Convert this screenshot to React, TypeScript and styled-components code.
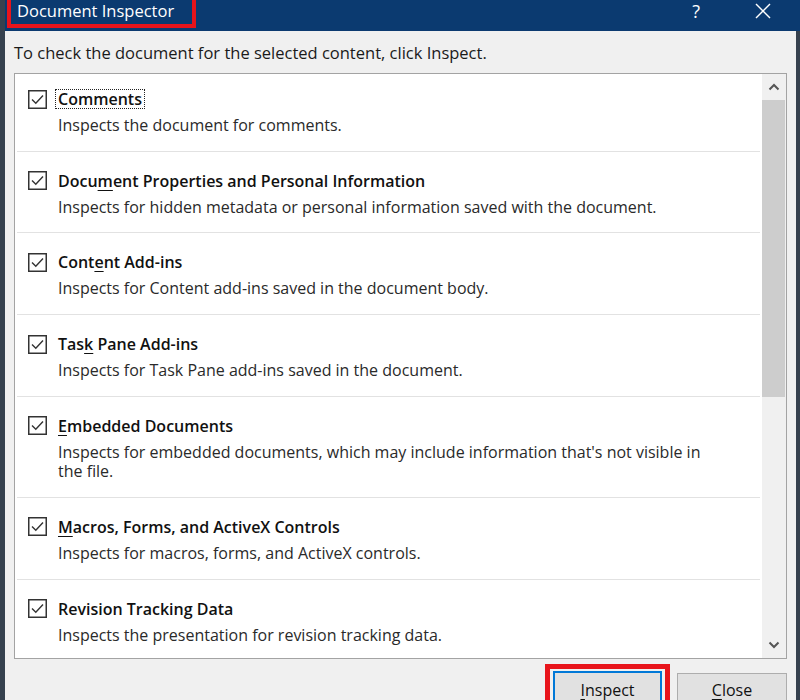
import styled, { createGlobalStyle } from "styled-components";

const items = [
  {
    title: "Comments",
    desc: "Inspects the document for comments.",
    focused: true,
  },
  {
    title: "Document Properties and Personal Information",
    key: 4,
    desc: "Inspects for hidden metadata or personal information saved with the document.",
  },
  {
    title: "Content Add-ins",
    key: 4,
    desc: "Inspects for Content add-ins saved in the document body.",
  },
  {
    title: "Task Pane Add-ins",
    key: 3,
    desc: "Inspects for Task Pane add-ins saved in the document.",
  },
  {
    title: "Embedded Documents",
    key: 0,
    desc: "Inspects for embedded documents, which may include information that's not visible in the file.",
  },
  {
    title: "Macros, Forms, and ActiveX Controls",
    key: 0,
    desc: "Inspects for macros, forms, and ActiveX controls.",
  },
  {
    title: "Revision Tracking Data",
    desc: "Inspects the presentation for revision tracking data.",
  },
];

const GlobalStyle = createGlobalStyle`
  html, body {
    margin: 0;
    padding: 0;
    background: #36414e;
  }
  * {
    box-sizing: border-box;
  }
`;

const Screen = styled.div`
  width: 800px;
  height: 700px;
  overflow: hidden;
  padding-left: 5px;
  padding-right: 4px;
  font-family: "Open Sans", "Noto Sans", sans-serif;
`;

const Dialog = styled.div`
  height: 100%;
  display: flex;
  flex-direction: column;
  background: #f0f0f0;
`;

const TitleBar = styled.div`
  height: 31px;
  flex: none;
  display: flex;
  align-items: flex-start;
  background: #0b3a70;
  color: #fff;
  margin-right: -4px;
`;

const TitleLabel = styled.div`
  margin-left: 2px;
  height: 28px;
  width: 189px;
  padding: 0 0 0 6px;
  border: 4px solid #e8141b;
  border-top: none;
  font-size: 16.5px;
  line-height: 21px;
`;

const TitleButtons = styled.div`
  margin-left: auto;
  display: flex;
  align-items: center;
  height: 22px;
`;

const Help = styled.span`
  font-size: 18px;
  line-height: 22px;
  margin-right: 55px;
`;

const CloseX = styled.svg`
  width: 16px;
  height: 16px;
  margin-right: 29px;
`;

const Body = styled.div`
  flex: 1;
  display: flex;
  flex-direction: column;
  padding: 12px 9px 0 9px;
  min-height: 0;
`;

const Instruction = styled.div`
  font-size: 16.5px;
  line-height: 20px;
  color: #1a1a1a;
  margin-bottom: 10px;
  white-space: nowrap;
`;

const ListBox = styled.div`
  height: 586px;
  flex: none;
  display: flex;
  background: #fff;
  border: 1px solid #a3a3a3;
`;

const ListItems = styled.div`
  flex: 1;
  overflow: hidden;
  padding: 0 2px;
`;

const Item = styled.div`
  display: grid;
  grid-template-columns: 19px 1fr;
  column-gap: 11px;
  row-gap: 7px;
  padding: 19px 42px 15.2px 11px;
  border-bottom: 1px solid #e2e2e2;

  &:first-child {
    padding-top: 15px;
  }
  &:last-child {
    border-bottom: none;
  }
`;

const Box = styled.svg`
  width: 19px;
  height: 19px;
  align-self: center;
`;

const Title = styled.div<{ $focused?: boolean }>`
  justify-self: start;
  font-size: 16px;
  font-weight: 600;
  line-height: 18px;
  color: #111;
  padding: 0 2px;
  margin-left: -3px;
  white-space: nowrap;
  border: 1px dotted ${(p) => (p.$focused ? "#222" : "transparent")};
`;

const Key = styled.u`
  text-decoration-thickness: 1px;
  text-underline-offset: 3px;
`;

const Desc = styled.div`
  grid-column: 2;
  font-size: 16px;
  line-height: 19.5px;
  color: #2a2a2a;
`;

const ScrollBar = styled.div`
  width: 24px;
  flex: none;
  display: flex;
  flex-direction: column;
  background: #f0f0f0;
`;

const Arrow = styled.div`
  height: 26px;
  flex: none;
  display: flex;
  align-items: center;
  justify-content: center;
`;

const Thumb = styled.div`
  height: 297px;
  flex: none;
  background: #cdcdcd;
  margin: 0 1px 0 0;
`;

const Track = styled.div`
  flex: 1;
`;

const Footer = styled.div`
  display: flex;
  justify-content: flex-end;
  align-items: flex-start;
  gap: 7px;
  margin-top: 5px;
`;

const Highlight = styled.div`
  border: 5px solid #e8141b;
  border-bottom: none;
  padding: 2px 3px 0 3px;
  height: 40px;
`;

const Button = styled.div<{ $default?: boolean }>`
  width: ${(p) => (p.$default ? "109px" : "110px")};
  height: 36px;
  margin-top: ${(p) => (p.$default ? "0" : "9px")};
  display: flex;
  justify-content: center;
  padding-top: ${(p) => (p.$default ? "7px" : "6px")};
  background: #e1e1e1;
  border: ${(p) => (p.$default ? "2px solid #0078d7" : "1px solid #adadad")};
  font-size: 16px;
  line-height: 20px;
  color: #111;
`;

function Label({ text, at }: { text: string; at?: number }) {
  if (at === undefined) return <>{text}</>;
  return (
    <>
      {text.slice(0, at)}
      <Key>{text[at]}</Key>
      {text.slice(at + 1)}
    </>
  );
}

function Check() {
  return (
    <Box viewBox="0 0 19 19">
      <rect x="0.75" y="0.75" width="17.5" height="17.5" fill="#fff" stroke="#333" strokeWidth="1.5" />
      <polyline points="4,9.5 7.8,13.2 15,5.5" fill="none" stroke="#333" strokeWidth="1.4" />
    </Box>
  );
}

function Chevron({ up }: { up?: boolean }) {
  return (
    <svg width="12" height="8" viewBox="0 0 12 8">
      <polyline
        points={up ? "1.5,6.5 6,2 10.5,6.5" : "1.5,1.5 6,6 10.5,1.5"}
        fill="none"
        stroke="#555"
        strokeWidth="2"
      />
    </svg>
  );
}

export default function App() {
  return (
    <Screen>
      <GlobalStyle />
      <Dialog>
        <TitleBar>
          <TitleLabel>Document Inspector</TitleLabel>
          <TitleButtons>
            <Help>?</Help>
            <CloseX viewBox="0 0 16 16">
              <line x1="1" y1="1" x2="15" y2="15" stroke="#fff" strokeWidth="1.5" />
              <line x1="15" y1="1" x2="1" y2="15" stroke="#fff" strokeWidth="1.5" />
            </CloseX>
          </TitleButtons>
        </TitleBar>
        <Body>
          <Instruction>To check the document for the selected content, click Inspect.</Instruction>
          <ListBox>
            <ListItems>
              {items.map((item) => (
                <Item key={item.title}>
                  <Check />
                  <Title $focused={item.focused}>
                    <Label text={item.title} at={item.key} />
                  </Title>
                  <Desc>{item.desc}</Desc>
                </Item>
              ))}
            </ListItems>
            <ScrollBar>
              <Arrow>
                <Chevron up />
              </Arrow>
              <Thumb />
              <Track />
              <Arrow>
                <Chevron />
              </Arrow>
            </ScrollBar>
          </ListBox>
          <Footer>
            <Highlight>
              <Button $default>
                <Label text="Inspect" at={0} />
              </Button>
            </Highlight>
            <Button>
              <Label text="Close" at={0} />
            </Button>
          </Footer>
        </Body>
      </Dialog>
    </Screen>
  );
}
